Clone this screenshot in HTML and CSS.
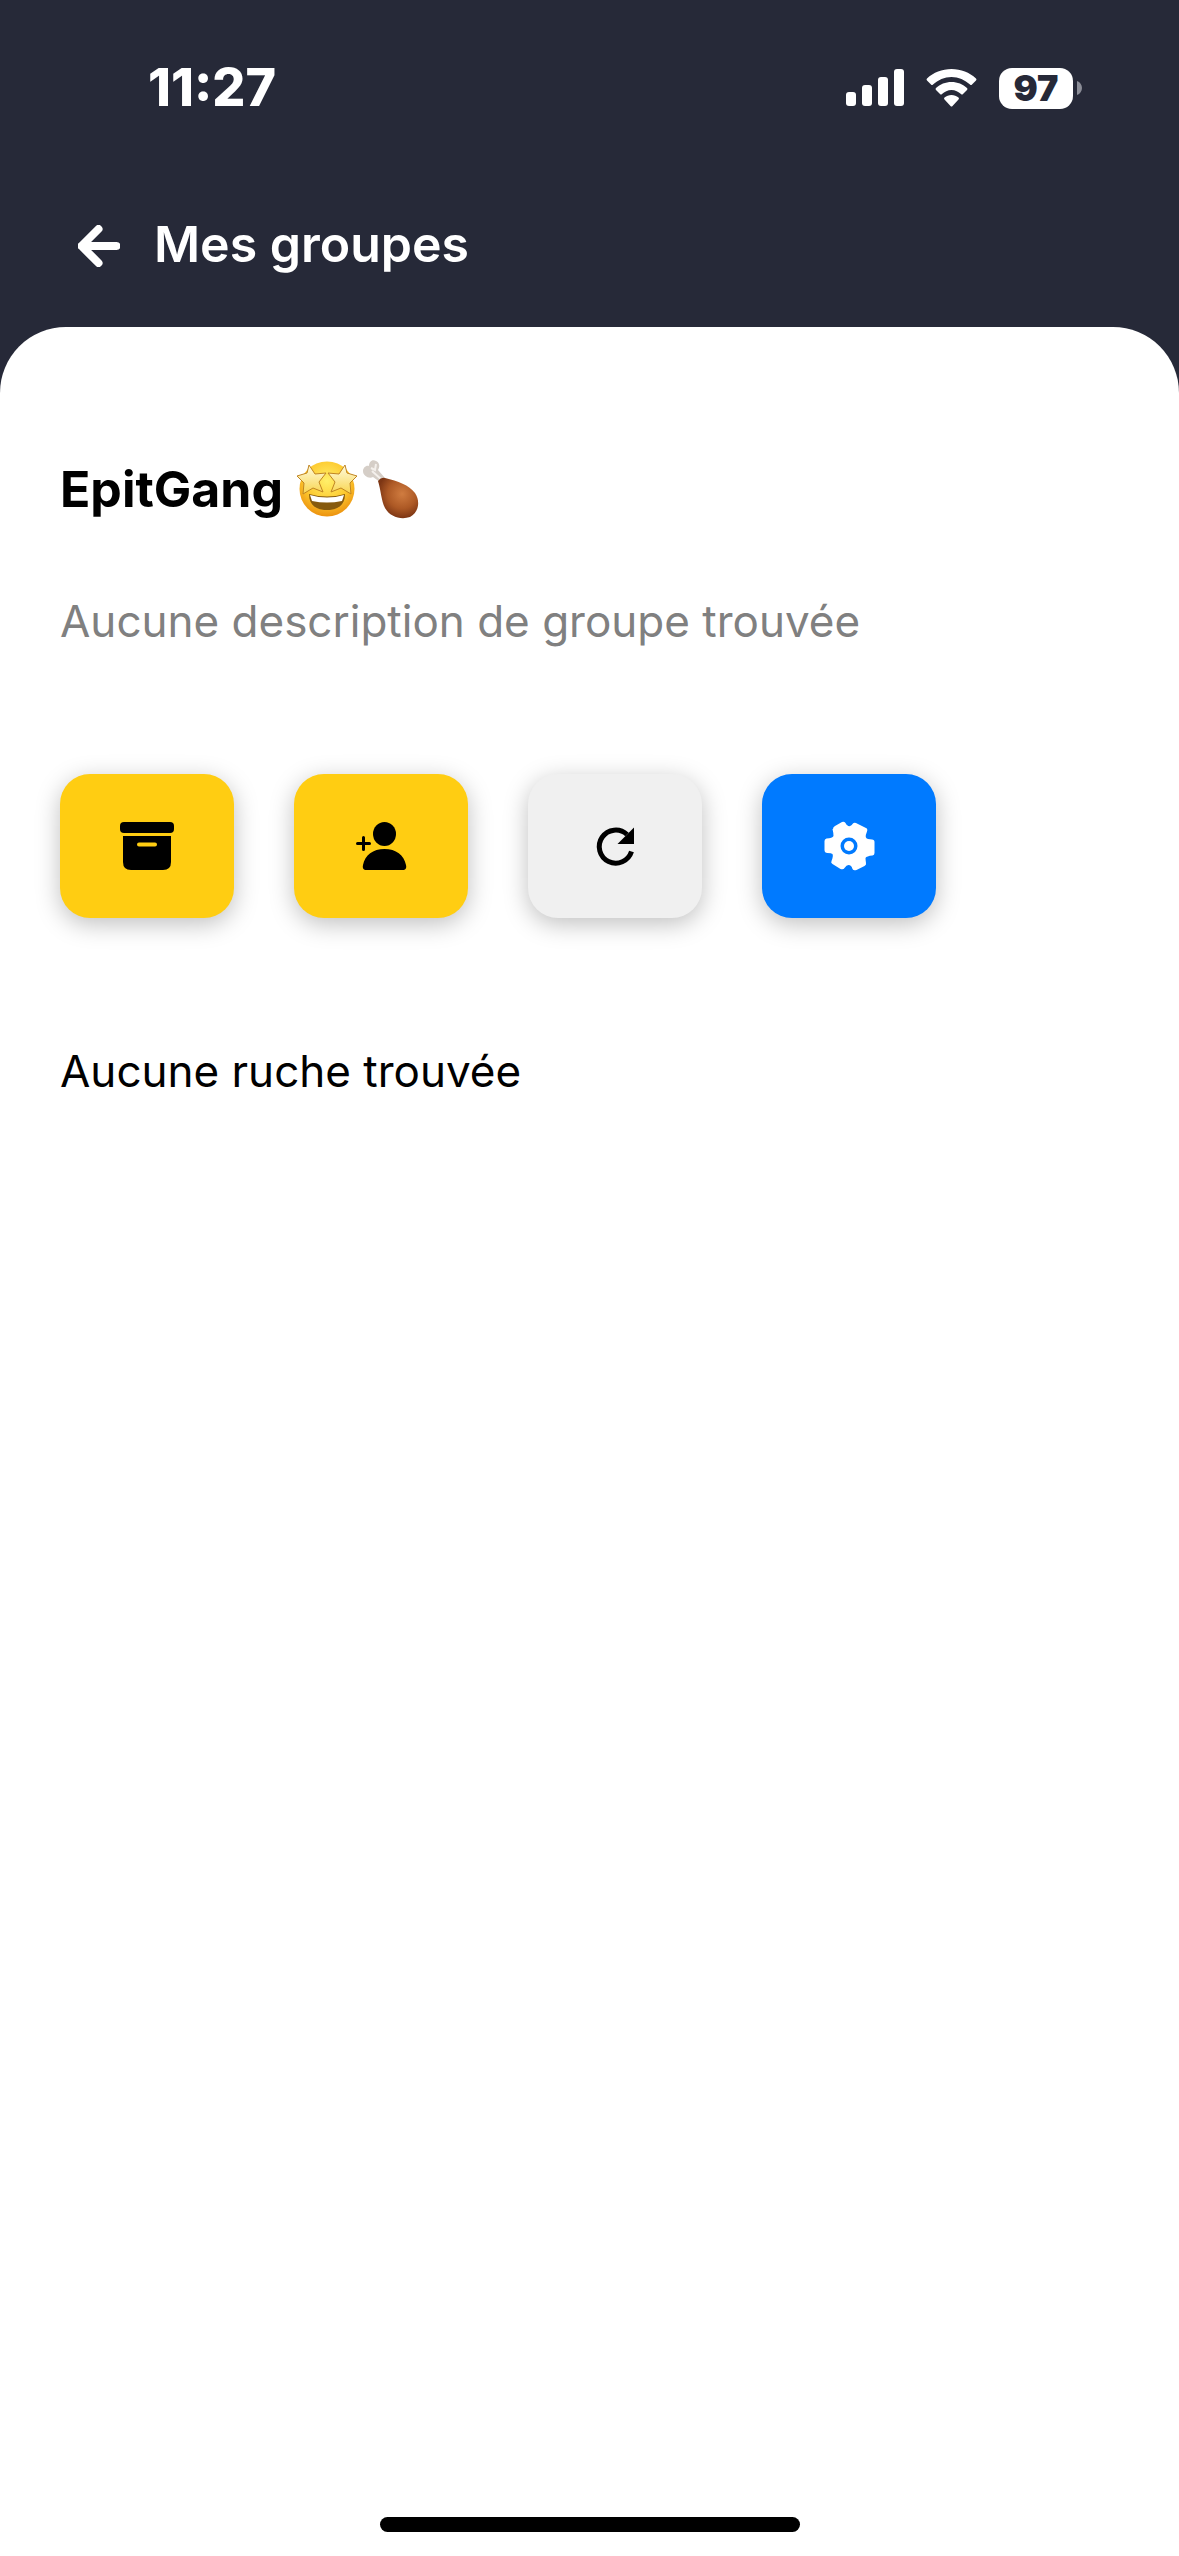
FILE: index.html
```html
<!DOCTYPE html>
<html lang="fr">
<head>
<meta charset="utf-8">
<meta name="viewport" content="width=device-width, initial-scale=1">
<title>Mes groupes</title>
<link rel="stylesheet" href="styles.css">
</head>
<body>
<div class="status">
  <span class="time">11:27</span>
  <div class="indicators">
    <svg class="signal" viewBox="0 0 58 38" aria-hidden="true"><rect x="0" y="23" width="10" height="14" rx="3"/><rect x="16" y="16" width="10" height="21" rx="3"/><rect x="32" y="8" width="10" height="29" rx="3"/><rect x="48" y="0" width="10" height="37" rx="3"/></svg>
    <svg class="wifi" viewBox="0 0 51 38" aria-hidden="true"><path d="M25.500 0C35 0 43.500 3.500 50 9.500q1 1 0 2l-4 4q-1 1-2 0C39 11 32.500 8 25.500 8S12 11 7 15.500q-1 1-2 0l-4-4q-1-1 0-2C7.500 3.500 16 0 25.500 0Z"/><path d="M25.500 13c6 0 11.500 2.300 15.500 6q1 1 0 2l-4 4q-1 1-2 0c-2.500-2.300-5.800-4-9.500-4s-7 1.700-9.500 4q-1 1-2 0l-4-4q-1-1 0-2c4-3.700 9.500-6 15.500-6Z"/><path d="M25.500 26c2.700 0 5 1 7 2.500q1 1 0 2L26.500 37q-1 1-2 0l-6-6.500q-1-1 0-2c2-1.500 4.300-2.500 7-2.500Z"/></svg>
    <div class="battery"><span class="level">97</span><svg class="nub" viewBox="0 0 5 14" aria-hidden="true"><path d="M0 0c3 1 5 4 5 7s-2 6-5 7Z"/></svg></div>
  </div>
</div>
<header class="bar">
  <button class="back" type="button" aria-label="Retour"><svg viewBox="0 0 42 42"><path d="M20.500 4 3.500 21l17 17M3.500 21H38.500"/></svg></button>
  <h1>Mes groupes</h1>
</header>
<main class="sheet">
  <h2 class="name">EpitGang
    <svg class="emoji" viewBox="0 0 60 60" role="img" aria-label="Visage avec des étoiles dans les yeux">
      <defs><radialGradient id="face" cx="50%" cy="35%" r="65%"><stop offset="0" stop-color="#fff06a"/><stop offset=".6" stop-color="#fdc92f"/><stop offset="1" stop-color="#ec920f"/></radialGradient>
      <linearGradient id="star" x1="0" y1="0" x2="0" y2="1"><stop offset="0" stop-color="#fffce0"/><stop offset="1" stop-color="#f8d44c"/></linearGradient></defs>
      <circle cx="30" cy="30" r="27.500" fill="url(#face)"/>
      <path d="M12 35q18 5 36 0c0 12-8 16-18 16S12 47 12 35Z" fill="#865a0e"/>
      <path d="M13 36q17 5 34 0l-2 6q-15 3-30 0Z" fill="#fff"/>
      <g fill="url(#star)" stroke="#c08422" stroke-width="1" stroke-linejoin="round"><path id="eye" d="m12 6 6 9 11-1-7 9 4 10-10-4-10 6 1-11-7-7 10-3Z"/><use href="#eye" transform="matrix(-1 0 0 1 60 0)"/></g>
    </svg><svg class="emoji leg" viewBox="0 0 60 60" role="img" aria-label="Cuisse de poulet">
      <defs><radialGradient id="meat" cx="60%" cy="40%" r="60%"><stop offset="0" stop-color="#d07c40"/><stop offset=".6" stop-color="#ad5925"/><stop offset="1" stop-color="#7d3614"/></radialGradient></defs>
      <path d="M19 23 12 18C8 20 2 17 2 12c0-3 3-6 6-5C8 3 11 0 15 2c4 2 4 6 2 9l7 8Z" fill="#d5cec7"/>
      <path d="m10 9 4 2 1-6m-4 7 10 9" fill="none" stroke="#f4f0ec" stroke-width="2"/>
      <path d="M17 22q3-4 7-3c13 3 24 7 30 15 6 9 3 20-5 24-9 3-20 0-25-9-4-8-4-18-7-27Z" fill="url(#meat)"/>
    </svg>
  </h2>
  <p class="description">Aucune description de groupe trouvée</p>
  <div class="actions">
    <button class="action" type="button" aria-label="Archiver"><svg viewBox="0 0 60 60"><rect x="3" y="6" width="54" height="11" rx="4"/><path fill-rule="evenodd" d="M6 20h48v26q0 8-8 8H14q-8 0-8-8ZM22 26.500a1.500 1.500 0 0 0 0 4h16a1.500 1.500 0 0 0 0-4Z"/></svg></button>
    <button class="action" type="button" aria-label="Ajouter un membre"><svg viewBox="0 0 60 60"><ellipse cx="33.500" cy="18" rx="11.500" ry="12"/><path d="M14 54q-3-1-2-5c2-10 10-16 21.500-16S53 39 55 49q1 4-2 5Z"/><path class="plus" d="M12.500 21.500v12M6.500 27.500h12"/></svg></button>
    <button class="action refresh" type="button" aria-label="Actualiser"><svg viewBox="0 0 60 60"><path class="arc" d="M46.500 35.500A16.500 16.500 0 1 1 42 18.500"/><path d="M49 11.500V28H32.500Z"/></svg></button>
    <button class="action settings" type="button" aria-label="Paramètres"><svg viewBox="0 0 60 60"><path fill-rule="evenodd" d="M14 13q0-2 2-3l7-4q2-1 3.500 1c2 4 5 4 7 1q1.500-2 3.500-1l10 5q2 1 1 3.500-3 7 1 7.500l4 .5q2.500 0 2.500 2.500v11q0 2-2 2.500-6 .5-7 2.500 0 2 .5 5 .5 2-1.500 3l-8 4q-3 1-4-1-1-4-4-4-2 0-4 3-1 2-4 1l-8-5q-2-1-1-3 2-5 1-7-1-1-5-1-3 0-3-3V25q0-2 2-2.500 6-.5 7-2.500 0-3-1-7Zm16 8.500a8.500 8.500 0 1 0 0 17 8.500 8.500 0 0 0 0-17Z"/><circle cx="30" cy="30" r="5"/></svg></button>
  </div>
  <p class="empty">Aucune ruche trouvée</p>
  <div class="home"></div>
</main>
</body>
</html>
```
FILE: styles.css
```css
* { box-sizing: border-box; }
body { margin: 0; min-height: 100vh; display: flex; flex-direction: column; background: #262938; font-family: Inter, "Liberation Sans", sans-serif; color: #000; }
h1, h2, p { margin: 0; }
button { border: 0; padding: 0; cursor: pointer; }
svg { display: block; }
.status { display: flex; justify-content: space-between; align-items: center; height: 176px; padding: 0 97px 0 148px; color: #fff; }
.time { font-size: 52px; font-weight: 800; line-height: 60px; }
.indicators { display: flex; align-items: center; gap: 22px; fill: #fff; }
.signal { width: 58px; height: 38px; }
.wifi { width: 51px; height: 38px; }
.battery { display: flex; align-items: center; gap: 4px; }
.level { width: 74px; height: 41px; border-radius: 13px; background: #fff; color: #262938; font-size: 36px; font-weight: 900; line-height: 41px; text-align: center; }
.nub { width: 5px; height: 14px; fill: #8b8d97; }
.bar { display: flex; align-items: center; gap: 34px; height: 151px; padding: 0 78px 12px; color: #fff; }
.bar h1 { padding-bottom: 4px; font-size: 50px; font-weight: 600; line-height: 68px; }
.back { background: none; }
.back svg { width: 42px; height: 42px; fill: none; stroke: #fff; stroke-width: 8px; stroke-linecap: round; stroke-linejoin: round; }
.sheet { flex: 1; display: flex; flex-direction: column; padding: 126px 60px 24px; background: #fff; border-radius: 66px 66px 0 0; }
.name { display: flex; align-items: center; height: 72px; font-size: 50px; font-weight: 700; line-height: 72px; }
.emoji { width: 60px; height: 60px; margin-left: 14px; }
.leg { margin-left: 4px; }
.description, .empty { font-size: 44px; line-height: 64px; }
.description { margin-top: 64px; color: #808080; }
.actions { display: flex; flex-wrap: wrap; gap: 60px; margin-top: 121px; }
.action { display: grid; place-items: center; width: 174px; height: 144px; border-radius: 30px; background: #ffcd12; box-shadow: 0 6px 24px rgba(0, 0, 0, .25); }
.action svg { width: 60px; height: 60px; }
.plus { fill: none; stroke: #000; stroke-width: 3px; stroke-linecap: round; }
.refresh { background: #f0f0f0; }
.arc { fill: none; stroke: #000; stroke-width: 5px; }
.settings { background: #007aff; fill: #fff; }
.empty { margin-top: 121px; }
.home { width: 420px; max-width: 60%; height: 15px; margin: auto auto 0; border-radius: 8px; background: #000; }
```
